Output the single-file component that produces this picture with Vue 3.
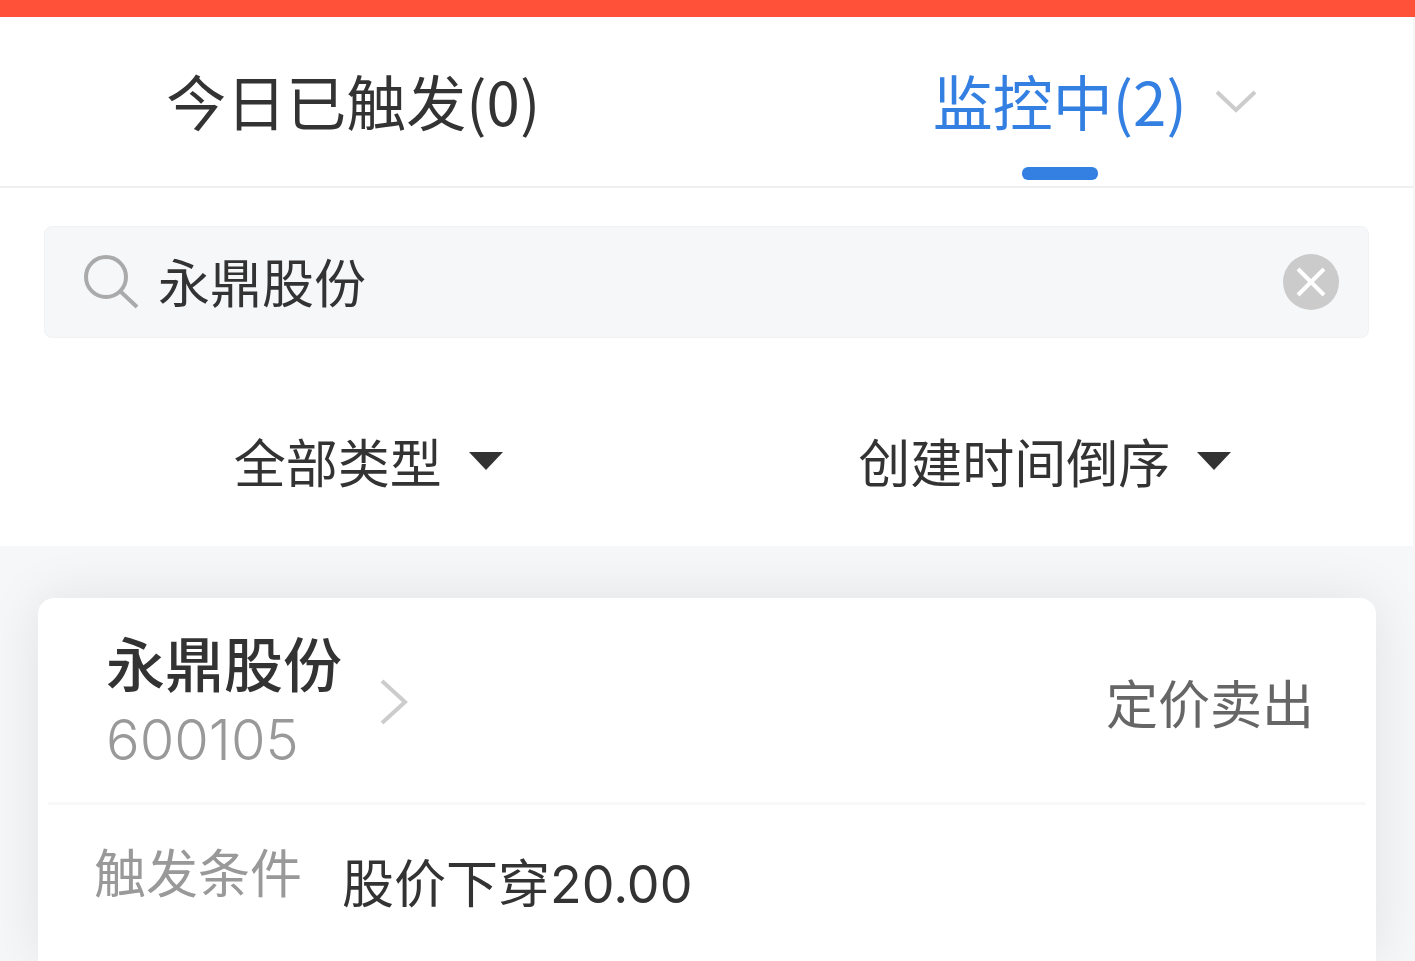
<script setup>
import { ref } from 'vue'

const tab = ref('watching')
const keyword = ref('永鼎股份')
const type = ref('全部类型')
const order = ref('创建时间倒序')
</script>

<template>
  <div class="page">
    <div class="banner"></div>

    <main class="content">
      <nav class="tabs">
        <button class="tab" :class="{ active: tab === 'triggered' }" type="button" @click="tab = 'triggered'">
          <span class="tab-label">今日已触发(0)</span>
        </button>
        <button class="tab" :class="{ active: tab === 'watching' }" type="button" @click="tab = 'watching'">
          <span class="tab-label">监控中(2)</span>
          <svg class="tab-arrow" width="42" height="26" viewBox="0 0 42 26" aria-hidden="true">
            <path d="M2 5 L21 23 L40 5" fill="none" stroke="#cccccc" stroke-width="4" />
          </svg>
        </button>
      </nav>

      <form class="search" role="search" @submit.prevent>
        <label class="search-icon" for="keyword" aria-label="搜索">
          <svg width="56" height="56" viewBox="0 0 56 56" aria-hidden="true">
            <circle cx="22" cy="23" r="20" fill="none" stroke="#aaaaaa" stroke-width="4" />
            <path d="M36 37 L53 53" fill="none" stroke="#aaaaaa" stroke-width="4" />
          </svg>
        </label>
        <input id="keyword" v-model="keyword" class="search-input" type="text" />
        <button class="clear" type="button" aria-label="清除" @click="keyword = ''">
          <svg width="58" height="58" viewBox="0 0 58 58" aria-hidden="true">
            <circle cx="29" cy="29" r="28" fill="#cbcbcb" />
            <path d="M16 16 L42 42 M42 16 L16 42" fill="none" stroke="#ffffff" stroke-width="4" />
          </svg>
        </button>
      </form>

      <div class="filters">
        <label class="filter">
          <select v-model="type" class="filter-select" aria-label="类型">
            <option>全部类型</option>
          </select>
          <svg width="34" height="18" viewBox="0 0 34 18" aria-hidden="true">
            <path d="M0 0 H34 L17 18 Z" fill="#333333" />
          </svg>
        </label>
        <label class="filter">
          <select v-model="order" class="filter-select" aria-label="排序">
            <option>创建时间倒序</option>
          </select>
          <svg width="34" height="18" viewBox="0 0 34 18" aria-hidden="true">
            <path d="M0 0 H34 L17 18 Z" fill="#333333" />
          </svg>
        </label>
      </div>

      <section class="list">
        <article class="card">
          <header class="card-head">
            <a class="stock" href="#">
              <span class="stock-text">
                <span class="stock-name">永鼎股份</span>
                <span class="stock-code">600105</span>
              </span>
              <svg width="28" height="48" viewBox="0 0 28 48" aria-hidden="true">
                <path d="M2 3 L25 24 L2 45" fill="none" stroke="#cccccc" stroke-width="4" />
              </svg>
            </a>
            <span class="kind">定价卖出</span>
          </header>
          <dl class="condition">
            <dt>触发条件</dt>
            <dd>股价下穿20.00</dd>
          </dl>
        </article>
      </section>
    </main>
  </div>
</template>

<style>
body {
  margin: 0;
}
</style>

<style scoped>
.page {
  display: flex;
  flex-direction: column;
  min-height: 100vh;
  background: #fff;
  color: #333;
  font-family: "Noto Sans CJK SC", sans-serif;
  font-size: 52px;
  line-height: 60px;
}

button,
input,
select {
  margin: 0;
  padding: 0;
  border: 0;
  background: none;
  color: inherit;
  font: inherit;
}

svg {
  display: block;
  flex: none;
}

.banner {
  height: 17px;
  background: #ff503a;
}

.content {
  flex: 1;
  display: flex;
  flex-direction: column;
  border-right: 2px solid #f6f6f7;
}

.tabs {
  display: grid;
  grid-template-columns: 1fr 1fr;
  border-bottom: 2px solid #f0f0f0;
}

.tab {
  position: relative;
  display: grid;
  grid-template-columns: 1fr auto 1fr;
  align-items: center;
  height: 169px;
  padding-bottom: 4px;
  font-size: 60px;
}

.tab-label {
  grid-column: 2;
}

.tab-arrow {
  margin-left: 28px;
}

.tab.active {
  color: #3480e2;
}

.tab.active::after {
  content: "";
  position: absolute;
  left: 50%;
  bottom: 6px;
  width: 76px;
  height: 13px;
  margin-left: -38px;
  border-radius: 6px;
  background: #3480e2;
}

.search {
  display: flex;
  align-items: center;
  height: 112px;
  margin: 38px 44px 0;
  padding: 0 28px 0 39px;
  box-sizing: border-box;
  border: 1px solid #f1f2f4;
  border-radius: 8px;
  background: #f6f7f9;
}

.search-input {
  flex: 1;
  min-width: 0;
  height: 76px;
  margin: 0 20px 0 18px;
  padding-bottom: 4px;
  box-sizing: border-box;
  outline: 0;
}

.filters {
  display: grid;
  grid-template-columns: 1fr 1fr;
  height: 208px;
  padding: 38px 30px 0;
  box-sizing: border-box;
}

.filter {
  display: flex;
  align-items: center;
  justify-content: center;
  gap: 26px;
}

.filter-select {
  appearance: none;
  height: 76px;
  outline: 0;
}

.list {
  flex: 1;
  display: flex;
  flex-direction: column;
  padding: 52px 37px 0 38px;
  overflow: hidden;
  background: #f6f7f9;
}

.card {
  flex: 1;
  border-radius: 16px 16px 0 0;
  background: #fff;
  box-shadow: 0 0 56px rgba(0, 0, 0, 0.09);
}

.card-head {
  display: flex;
  align-items: center;
  justify-content: space-between;
  height: 207px;
  margin: 0 10px;
  padding: 4px 52px 0 58px;
  box-sizing: border-box;
  border-bottom: 3px solid #f8f8f8;
}

.stock {
  display: flex;
  align-items: center;
  gap: 38px;
  color: inherit;
  text-decoration: none;
}

.stock-text {
  display: flex;
  flex-direction: column;
}

.stock-name {
  font-size: 59px;
  font-weight: 500;
  line-height: 76px;
}

.stock-code {
  color: #999;
  font-family: Inter, "Noto Sans CJK SC", sans-serif;
  font-size: 56px;
  font-weight: 300;
  line-height: 80px;
}

.kind {
  color: #666;
}

.condition {
  display: flex;
  gap: 40px;
  margin: 0;
  padding: 36px 56px;
}

.condition dt {
  color: #999;
}

.condition dd {
  margin: 0;
  padding-top: 14px;
  font-family: Inter, "Noto Sans CJK SC", sans-serif;
}
</style>
